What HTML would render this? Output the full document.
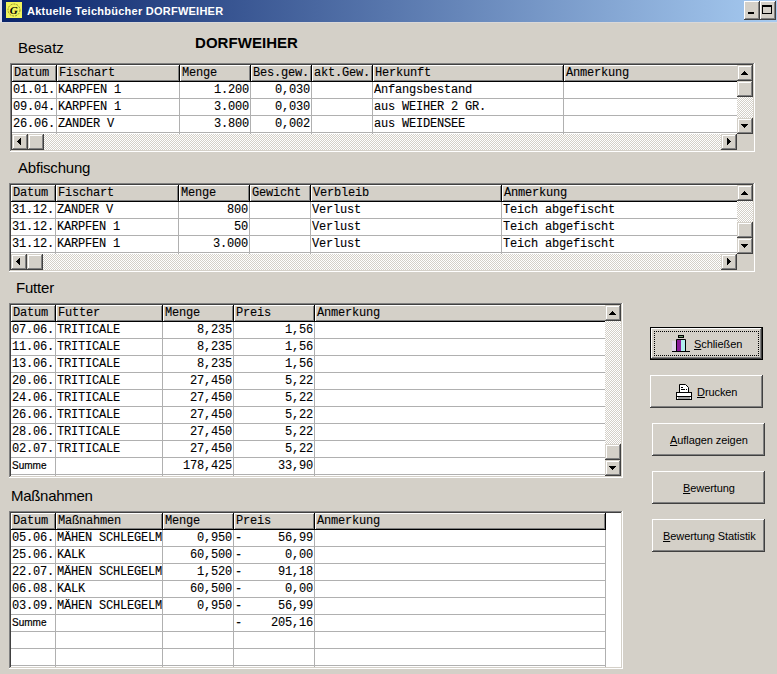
<!DOCTYPE html>
<html><head><meta charset="utf-8"><style>
html,body{margin:0;padding:0}
body{width:777px;height:674px;position:relative;overflow:hidden;background:#D4D0C8;font-family:"Liberation Sans",sans-serif}
div,svg{position:absolute}
.t{font:12px "Liberation Mono",monospace;line-height:16px;white-space:pre;color:#000;letter-spacing:-0.2px;-webkit-text-stroke:0.1px #000}
.s{font:10px "Liberation Sans",sans-serif;line-height:16px;white-space:pre;color:#000;-webkit-text-stroke:0.2px #000}
.ttl{font:bold 11px "Liberation Sans",sans-serif;line-height:14px;white-space:pre;color:#fff;letter-spacing:0.25px}
.btn{font:11px "Liberation Sans",sans-serif;line-height:14px;white-space:pre;color:#000;letter-spacing:-0.08px}
.lbl{font:15px "Liberation Sans",sans-serif;line-height:20px;white-space:pre;color:#000}
</style></head><body>
<div style="left:0;top:0;width:2px;height:22px;background:#E4E2EA"></div>
<div style="left:2px;top:0;width:775px;height:22px;background:linear-gradient(to right,#0A246A 0%,#A6CAF0 100%)"></div>
<div style="left:0;top:22px;width:777px;height:1px;background:#DAD8D8"></div>
<svg style="left:6px;top:2px" width="16" height="16" viewBox="0 0 16 16"><rect width="16" height="16" fill="#F2F45C"/><circle cx="8" cy="8" r="6" fill="none" stroke="#7A7A18" stroke-width="0.8" stroke-dasharray="2 1"/><text x="7.8" y="12" text-anchor="middle" font-family="Liberation Serif" font-style="italic" font-weight="bold" font-size="11" fill="#000">G</text></svg>
<div class="ttl" style="left:27px;top:4px">Aktuelle Teichbücher DORFWEIHER</div>
<div style="left:744px;top:1px;width:16px;height:19px;background:#404040"></div>
<div style="left:744px;top:1px;width:15px;height:18px;background:#fff"></div>
<div style="left:745px;top:2px;width:14px;height:17px;background:#808080"></div>
<div style="left:745px;top:2px;width:13px;height:16px;background:#D4D0C8"></div>
<div style="left:748px;top:12px;width:6px;height:2px;background:#000"></div>
<div style="left:760px;top:1px;width:16px;height:19px;background:#404040"></div>
<div style="left:760px;top:1px;width:15px;height:18px;background:#fff"></div>
<div style="left:761px;top:2px;width:14px;height:17px;background:#808080"></div>
<div style="left:761px;top:2px;width:13px;height:16px;background:#D4D0C8"></div>
<div style="left:762px;top:5px;width:10px;height:9px;background:#000"></div>
<div style="left:763px;top:7px;width:8px;height:6px;background:#D4D0C8"></div>
<div style="left:650px;top:327px;width:113px;height:33px;background:#000"></div>
<div style="left:651px;top:328px;width:111px;height:31px;background:#404040"></div>
<div style="left:651px;top:328px;width:110px;height:30px;background:#fff"></div>
<div style="left:652px;top:329px;width:109px;height:29px;background:#808080"></div>
<div style="left:652px;top:329px;width:108px;height:28px;background:#D4D0C8"></div>
<div style="left:654px;top:331px;width:105px;height:25px;border:1px dotted #000;box-sizing:border-box"></div>
<div style="left:650px;top:375px;width:113px;height:33px;background:#404040"></div>
<div style="left:650px;top:375px;width:112px;height:32px;background:#fff"></div>
<div style="left:651px;top:376px;width:111px;height:31px;background:#808080"></div>
<div style="left:651px;top:376px;width:110px;height:30px;background:#D4D0C8"></div>
<div style="left:652px;top:423px;width:113px;height:33px;background:#404040"></div>
<div style="left:652px;top:423px;width:112px;height:32px;background:#fff"></div>
<div style="left:653px;top:424px;width:111px;height:31px;background:#808080"></div>
<div style="left:653px;top:424px;width:110px;height:30px;background:#D4D0C8"></div>
<div style="left:652px;top:471px;width:113px;height:33px;background:#404040"></div>
<div style="left:652px;top:471px;width:112px;height:32px;background:#fff"></div>
<div style="left:653px;top:472px;width:111px;height:31px;background:#808080"></div>
<div style="left:653px;top:472px;width:110px;height:30px;background:#D4D0C8"></div>
<div style="left:652px;top:519px;width:113px;height:33px;background:#404040"></div>
<div style="left:652px;top:519px;width:112px;height:32px;background:#fff"></div>
<div style="left:653px;top:520px;width:111px;height:31px;background:#808080"></div>
<div style="left:653px;top:520px;width:110px;height:30px;background:#D4D0C8"></div>
<div class="btn" style="left:694px;top:337px;"><u>S</u>chließen</div>
<div class="btn" style="left:697px;top:385px;"><u>D</u>rucken</div>
<div class="btn" style="left:670px;top:433px;"><u>A</u>uflagen zeigen</div>
<div class="btn" style="left:683px;top:481px;"><u>B</u>ewertung</div>
<div class="btn" style="left:663px;top:529px;"><u>B</u>ewertung Statistik</div>
<svg style="left:670px;top:333px" width="22" height="20" viewBox="0 0 22 20"><rect x="2" y="8" width="4" height="10" fill="#E2D6EA"/><rect x="7" y="7" width="4" height="11" fill="#8A1A9A"/><rect x="11" y="7" width="4" height="11" fill="#B0F0F0"/><path d="M6.5 18 V6.5 H15.5 V18" fill="none" stroke="#000" stroke-width="1"/><rect x="8.5" y="2.5" width="5" height="2" fill="#70A070" stroke="#000" stroke-width="1"/><path d="M2 18.5 H20" stroke="#000" stroke-width="1"/></svg>
<svg style="left:676px;top:384px" width="17" height="17" viewBox="0 0 17 17"><path d="M3.5 8.5 V0.5 H9.5 L12.5 3.5 V8.5" fill="#fff" stroke="#000" stroke-width="1"/><rect x="5" y="3" width="2" height="1" fill="#000"/><rect x="5" y="5" width="4" height="1" fill="#000"/><rect x="10" y="5" width="1" height="1" fill="#000"/><rect x="0.5" y="8.5" width="15" height="7" fill="#fff" stroke="#000" stroke-width="1"/><rect x="1" y="12" width="14" height="1" fill="#000"/><rect x="2" y="13" width="12" height="2" fill="#A0A0A0"/></svg>
<div class="lbl" style="left:18px;top:38px;">Besatz</div>
<div class="lbl" style="left:195px;top:33px;font-weight:bold;letter-spacing:0.05px">DORFWEIHER</div>
<div class="lbl" style="left:18px;top:158px;letter-spacing:-0.2px">Abfischung</div>
<div class="lbl" style="left:16px;top:278px;letter-spacing:-0.2px">Futter</div>
<div class="lbl" style="left:11px;top:486px;letter-spacing:-0.3px">Maßnahmen</div>
<div style="left:10px;top:63px;width:745px;height:89px;background:#fff"></div>
<div style="left:10px;top:63px;width:744px;height:88px;background:#808080"></div>
<div style="left:11px;top:64px;width:743px;height:87px;background:#D4D0C8"></div>
<div style="left:11px;top:64px;width:742px;height:86px;background:#404040"></div>
<div style="left:12px;top:65px;width:741px;height:85px;background:#fff"></div>
<div style="left:12px;top:65px;width:725px;height:69px;overflow:hidden">
<div style="left:0;top:16px;width:953px;height:1px;background:#000"></div>
<div style="left:0;top:33px;width:953px;height:1px;background:#B0B0B0"></div>
<div style="left:0;top:50px;width:953px;height:1px;background:#B0B0B0"></div>
<div style="left:0;top:67px;width:953px;height:1px;background:#B0B0B0"></div>
<div style="left:0;top:84px;width:953px;height:1px;background:#B0B0B0"></div>
<div style="left:0px;top:0;width:44px;height:16px;background:#D4D0C8"></div>
<div style="left:0px;top:0;width:44px;height:1px;background:#fff"></div>
<div style="left:0px;top:0;width:1px;height:16px;background:#fff"></div>
<div style="left:43px;top:1px;width:1px;height:15px;background:#808080"></div>
<div style="left:1px;top:15px;width:43px;height:1px;background:#808080"></div>
<div style="left:44px;top:0;width:1px;height:17px;background:#000"></div>
<div style="left:44px;top:17px;width:1px;height:52px;background:#B0B0B0"></div>
<div class="t" style="left:2px;top:0">Datum</div>
<div style="left:45px;top:0;width:122px;height:16px;background:#D4D0C8"></div>
<div style="left:45px;top:0;width:122px;height:1px;background:#fff"></div>
<div style="left:45px;top:0;width:1px;height:16px;background:#fff"></div>
<div style="left:166px;top:1px;width:1px;height:15px;background:#808080"></div>
<div style="left:46px;top:15px;width:121px;height:1px;background:#808080"></div>
<div style="left:167px;top:0;width:1px;height:17px;background:#000"></div>
<div style="left:167px;top:17px;width:1px;height:52px;background:#B0B0B0"></div>
<div class="t" style="left:47px;top:0">Fischart</div>
<div style="left:168px;top:0;width:70px;height:16px;background:#D4D0C8"></div>
<div style="left:168px;top:0;width:70px;height:1px;background:#fff"></div>
<div style="left:168px;top:0;width:1px;height:16px;background:#fff"></div>
<div style="left:237px;top:1px;width:1px;height:15px;background:#808080"></div>
<div style="left:169px;top:15px;width:69px;height:1px;background:#808080"></div>
<div style="left:238px;top:0;width:1px;height:17px;background:#000"></div>
<div style="left:238px;top:17px;width:1px;height:52px;background:#B0B0B0"></div>
<div class="t" style="left:170px;top:0">Menge</div>
<div style="left:239px;top:0;width:60px;height:16px;background:#D4D0C8"></div>
<div style="left:239px;top:0;width:60px;height:1px;background:#fff"></div>
<div style="left:239px;top:0;width:1px;height:16px;background:#fff"></div>
<div style="left:298px;top:1px;width:1px;height:15px;background:#808080"></div>
<div style="left:240px;top:15px;width:59px;height:1px;background:#808080"></div>
<div style="left:299px;top:0;width:1px;height:17px;background:#000"></div>
<div style="left:299px;top:17px;width:1px;height:52px;background:#B0B0B0"></div>
<div class="t" style="left:241px;top:0">Bes.gew.</div>
<div style="left:300px;top:0;width:60px;height:16px;background:#D4D0C8"></div>
<div style="left:300px;top:0;width:60px;height:1px;background:#fff"></div>
<div style="left:300px;top:0;width:1px;height:16px;background:#fff"></div>
<div style="left:359px;top:1px;width:1px;height:15px;background:#808080"></div>
<div style="left:301px;top:15px;width:59px;height:1px;background:#808080"></div>
<div style="left:360px;top:0;width:1px;height:17px;background:#000"></div>
<div style="left:360px;top:17px;width:1px;height:52px;background:#B0B0B0"></div>
<div class="t" style="left:302px;top:0">akt.Gew.</div>
<div style="left:361px;top:0;width:190px;height:16px;background:#D4D0C8"></div>
<div style="left:361px;top:0;width:190px;height:1px;background:#fff"></div>
<div style="left:361px;top:0;width:1px;height:16px;background:#fff"></div>
<div style="left:550px;top:1px;width:1px;height:15px;background:#808080"></div>
<div style="left:362px;top:15px;width:189px;height:1px;background:#808080"></div>
<div style="left:551px;top:0;width:1px;height:17px;background:#000"></div>
<div style="left:551px;top:17px;width:1px;height:52px;background:#B0B0B0"></div>
<div class="t" style="left:363px;top:0">Herkunft</div>
<div style="left:552px;top:0;width:400px;height:16px;background:#D4D0C8"></div>
<div style="left:552px;top:0;width:400px;height:1px;background:#fff"></div>
<div style="left:552px;top:0;width:1px;height:16px;background:#fff"></div>
<div style="left:951px;top:1px;width:1px;height:15px;background:#808080"></div>
<div style="left:553px;top:15px;width:399px;height:1px;background:#808080"></div>
<div style="left:952px;top:0;width:1px;height:17px;background:#000"></div>
<div style="left:952px;top:17px;width:1px;height:52px;background:#B0B0B0"></div>
<div class="t" style="left:554px;top:0">Anmerkung</div>
<div class="t" style="left:1px;top:17px;width:43px;overflow:hidden">01.01.</div>
<div class="t" style="left:46px;top:17px;width:121px;overflow:hidden">KARPFEN 1</div>
<div class="t" style="left:168px;top:17px;width:69px;text-align:right">1.200</div>
<div class="t" style="left:239px;top:17px;width:59px;text-align:right">0,030</div>
<div class="t" style="left:362px;top:17px;width:189px;overflow:hidden">Anfangsbestand</div>
<div class="t" style="left:1px;top:34px;width:43px;overflow:hidden">09.04.</div>
<div class="t" style="left:46px;top:34px;width:121px;overflow:hidden">KARPFEN 1</div>
<div class="t" style="left:168px;top:34px;width:69px;text-align:right">3.000</div>
<div class="t" style="left:239px;top:34px;width:59px;text-align:right">0,030</div>
<div class="t" style="left:362px;top:34px;width:189px;overflow:hidden">aus WEIHER 2 GR.</div>
<div class="t" style="left:1px;top:51px;width:43px;overflow:hidden">26.06.</div>
<div class="t" style="left:46px;top:51px;width:121px;overflow:hidden">ZANDER V</div>
<div class="t" style="left:168px;top:51px;width:69px;text-align:right">3.800</div>
<div class="t" style="left:239px;top:51px;width:59px;text-align:right">0,002</div>
<div class="t" style="left:362px;top:51px;width:189px;overflow:hidden">aus WEIDENSEE</div>
</div>
<div style="left:737px;top:65px;width:16px;height:69px;background-color:#fff;background-image:linear-gradient(45deg,#D4D0C8 25%,transparent 25%,transparent 75%,#D4D0C8 75%),linear-gradient(45deg,#D4D0C8 25%,transparent 25%,transparent 75%,#D4D0C8 75%);background-size:2px 2px;background-position:0 0,1px 1px;"></div>
<div style="left:737px;top:65px;width:16px;height:16px;background:#404040"></div>
<div style="left:737px;top:65px;width:15px;height:15px;background:#D4D0C8"></div>
<div style="left:738px;top:66px;width:14px;height:14px;background:#808080"></div>
<div style="left:738px;top:66px;width:13px;height:13px;background:#fff"></div>
<div style="left:739px;top:67px;width:12px;height:12px;background:#D4D0C8"></div>
<div style="left:744px;top:71px;width:1px;height:1px;background:#000"></div>
<div style="left:743px;top:72px;width:3px;height:1px;background:#000"></div>
<div style="left:742px;top:73px;width:5px;height:1px;background:#000"></div>
<div style="left:741px;top:74px;width:7px;height:1px;background:#000"></div>
<div style="left:737px;top:118px;width:16px;height:16px;background:#404040"></div>
<div style="left:737px;top:118px;width:15px;height:15px;background:#D4D0C8"></div>
<div style="left:738px;top:119px;width:14px;height:14px;background:#808080"></div>
<div style="left:738px;top:119px;width:13px;height:13px;background:#fff"></div>
<div style="left:739px;top:120px;width:12px;height:12px;background:#D4D0C8"></div>
<div style="left:741px;top:124px;width:7px;height:1px;background:#000"></div>
<div style="left:742px;top:125px;width:5px;height:1px;background:#000"></div>
<div style="left:743px;top:126px;width:3px;height:1px;background:#000"></div>
<div style="left:744px;top:127px;width:1px;height:1px;background:#000"></div>
<div style="left:737px;top:81px;width:16px;height:16px;background:#404040"></div>
<div style="left:737px;top:81px;width:15px;height:15px;background:#D4D0C8"></div>
<div style="left:738px;top:82px;width:14px;height:14px;background:#808080"></div>
<div style="left:738px;top:82px;width:13px;height:13px;background:#fff"></div>
<div style="left:739px;top:83px;width:12px;height:12px;background:#D4D0C8"></div>
<div style="left:12px;top:134px;width:725px;height:16px;background-color:#fff;background-image:linear-gradient(45deg,#D4D0C8 25%,transparent 25%,transparent 75%,#D4D0C8 75%),linear-gradient(45deg,#D4D0C8 25%,transparent 25%,transparent 75%,#D4D0C8 75%);background-size:2px 2px;background-position:0 0,1px 1px;"></div>
<div style="left:12px;top:134px;width:16px;height:16px;background:#404040"></div>
<div style="left:12px;top:134px;width:15px;height:15px;background:#D4D0C8"></div>
<div style="left:13px;top:135px;width:14px;height:14px;background:#808080"></div>
<div style="left:13px;top:135px;width:13px;height:13px;background:#fff"></div>
<div style="left:14px;top:136px;width:12px;height:12px;background:#D4D0C8"></div>
<div style="left:17px;top:141px;width:1px;height:1px;background:#000"></div>
<div style="left:18px;top:140px;width:1px;height:3px;background:#000"></div>
<div style="left:19px;top:139px;width:1px;height:5px;background:#000"></div>
<div style="left:20px;top:138px;width:1px;height:7px;background:#000"></div>
<div style="left:721px;top:134px;width:16px;height:16px;background:#404040"></div>
<div style="left:721px;top:134px;width:15px;height:15px;background:#D4D0C8"></div>
<div style="left:722px;top:135px;width:14px;height:14px;background:#808080"></div>
<div style="left:722px;top:135px;width:13px;height:13px;background:#fff"></div>
<div style="left:723px;top:136px;width:12px;height:12px;background:#D4D0C8"></div>
<div style="left:727px;top:138px;width:1px;height:7px;background:#000"></div>
<div style="left:728px;top:139px;width:1px;height:5px;background:#000"></div>
<div style="left:729px;top:140px;width:1px;height:3px;background:#000"></div>
<div style="left:730px;top:141px;width:1px;height:1px;background:#000"></div>
<div style="left:28px;top:134px;width:16px;height:16px;background:#404040"></div>
<div style="left:28px;top:134px;width:15px;height:15px;background:#D4D0C8"></div>
<div style="left:29px;top:135px;width:14px;height:14px;background:#808080"></div>
<div style="left:29px;top:135px;width:13px;height:13px;background:#fff"></div>
<div style="left:30px;top:136px;width:12px;height:12px;background:#D4D0C8"></div>
<div style="left:737px;top:134px;width:16px;height:16px;background:#D4D0C8"></div>
<div style="left:9px;top:183px;width:746px;height:89px;background:#fff"></div>
<div style="left:9px;top:183px;width:745px;height:88px;background:#808080"></div>
<div style="left:10px;top:184px;width:744px;height:87px;background:#D4D0C8"></div>
<div style="left:10px;top:184px;width:743px;height:86px;background:#404040"></div>
<div style="left:11px;top:185px;width:742px;height:85px;background:#fff"></div>
<div style="left:11px;top:185px;width:726px;height:69px;overflow:hidden">
<div style="left:0;top:16px;width:892px;height:1px;background:#000"></div>
<div style="left:0;top:33px;width:892px;height:1px;background:#B0B0B0"></div>
<div style="left:0;top:50px;width:892px;height:1px;background:#B0B0B0"></div>
<div style="left:0;top:67px;width:892px;height:1px;background:#B0B0B0"></div>
<div style="left:0;top:84px;width:892px;height:1px;background:#B0B0B0"></div>
<div style="left:0px;top:0;width:44px;height:16px;background:#D4D0C8"></div>
<div style="left:0px;top:0;width:44px;height:1px;background:#fff"></div>
<div style="left:0px;top:0;width:1px;height:16px;background:#fff"></div>
<div style="left:43px;top:1px;width:1px;height:15px;background:#808080"></div>
<div style="left:1px;top:15px;width:43px;height:1px;background:#808080"></div>
<div style="left:44px;top:0;width:1px;height:17px;background:#000"></div>
<div style="left:44px;top:17px;width:1px;height:52px;background:#B0B0B0"></div>
<div class="t" style="left:2px;top:0">Datum</div>
<div style="left:45px;top:0;width:122px;height:16px;background:#D4D0C8"></div>
<div style="left:45px;top:0;width:122px;height:1px;background:#fff"></div>
<div style="left:45px;top:0;width:1px;height:16px;background:#fff"></div>
<div style="left:166px;top:1px;width:1px;height:15px;background:#808080"></div>
<div style="left:46px;top:15px;width:121px;height:1px;background:#808080"></div>
<div style="left:167px;top:0;width:1px;height:17px;background:#000"></div>
<div style="left:167px;top:17px;width:1px;height:52px;background:#B0B0B0"></div>
<div class="t" style="left:47px;top:0">Fischart</div>
<div style="left:168px;top:0;width:70px;height:16px;background:#D4D0C8"></div>
<div style="left:168px;top:0;width:70px;height:1px;background:#fff"></div>
<div style="left:168px;top:0;width:1px;height:16px;background:#fff"></div>
<div style="left:237px;top:1px;width:1px;height:15px;background:#808080"></div>
<div style="left:169px;top:15px;width:69px;height:1px;background:#808080"></div>
<div style="left:238px;top:0;width:1px;height:17px;background:#000"></div>
<div style="left:238px;top:17px;width:1px;height:52px;background:#B0B0B0"></div>
<div class="t" style="left:170px;top:0">Menge</div>
<div style="left:239px;top:0;width:60px;height:16px;background:#D4D0C8"></div>
<div style="left:239px;top:0;width:60px;height:1px;background:#fff"></div>
<div style="left:239px;top:0;width:1px;height:16px;background:#fff"></div>
<div style="left:298px;top:1px;width:1px;height:15px;background:#808080"></div>
<div style="left:240px;top:15px;width:59px;height:1px;background:#808080"></div>
<div style="left:299px;top:0;width:1px;height:17px;background:#000"></div>
<div style="left:299px;top:17px;width:1px;height:52px;background:#B0B0B0"></div>
<div class="t" style="left:241px;top:0">Gewicht</div>
<div style="left:300px;top:0;width:190px;height:16px;background:#D4D0C8"></div>
<div style="left:300px;top:0;width:190px;height:1px;background:#fff"></div>
<div style="left:300px;top:0;width:1px;height:16px;background:#fff"></div>
<div style="left:489px;top:1px;width:1px;height:15px;background:#808080"></div>
<div style="left:301px;top:15px;width:189px;height:1px;background:#808080"></div>
<div style="left:490px;top:0;width:1px;height:17px;background:#000"></div>
<div style="left:490px;top:17px;width:1px;height:52px;background:#B0B0B0"></div>
<div class="t" style="left:302px;top:0">Verbleib</div>
<div style="left:491px;top:0;width:400px;height:16px;background:#D4D0C8"></div>
<div style="left:491px;top:0;width:400px;height:1px;background:#fff"></div>
<div style="left:491px;top:0;width:1px;height:16px;background:#fff"></div>
<div style="left:890px;top:1px;width:1px;height:15px;background:#808080"></div>
<div style="left:492px;top:15px;width:399px;height:1px;background:#808080"></div>
<div style="left:891px;top:0;width:1px;height:17px;background:#000"></div>
<div style="left:891px;top:17px;width:1px;height:52px;background:#B0B0B0"></div>
<div class="t" style="left:493px;top:0">Anmerkung</div>
<div class="t" style="left:1px;top:17px;width:43px;overflow:hidden">31.12.</div>
<div class="t" style="left:46px;top:17px;width:121px;overflow:hidden">ZANDER V</div>
<div class="t" style="left:168px;top:17px;width:69px;text-align:right">800</div>
<div class="t" style="left:301px;top:17px;width:189px;overflow:hidden">Verlust</div>
<div class="t" style="left:492px;top:17px;width:399px;overflow:hidden">Teich abgefischt</div>
<div class="t" style="left:1px;top:34px;width:43px;overflow:hidden">31.12.</div>
<div class="t" style="left:46px;top:34px;width:121px;overflow:hidden">KARPFEN 1</div>
<div class="t" style="left:168px;top:34px;width:69px;text-align:right">50</div>
<div class="t" style="left:301px;top:34px;width:189px;overflow:hidden">Verlust</div>
<div class="t" style="left:492px;top:34px;width:399px;overflow:hidden">Teich abgefischt</div>
<div class="t" style="left:1px;top:51px;width:43px;overflow:hidden">31.12.</div>
<div class="t" style="left:46px;top:51px;width:121px;overflow:hidden">KARPFEN 1</div>
<div class="t" style="left:168px;top:51px;width:69px;text-align:right">3.000</div>
<div class="t" style="left:301px;top:51px;width:189px;overflow:hidden">Verlust</div>
<div class="t" style="left:492px;top:51px;width:399px;overflow:hidden">Teich abgefischt</div>
</div>
<div style="left:737px;top:185px;width:16px;height:69px;background-color:#fff;background-image:linear-gradient(45deg,#D4D0C8 25%,transparent 25%,transparent 75%,#D4D0C8 75%),linear-gradient(45deg,#D4D0C8 25%,transparent 25%,transparent 75%,#D4D0C8 75%);background-size:2px 2px;background-position:0 0,1px 1px;"></div>
<div style="left:737px;top:185px;width:16px;height:16px;background:#404040"></div>
<div style="left:737px;top:185px;width:15px;height:15px;background:#D4D0C8"></div>
<div style="left:738px;top:186px;width:14px;height:14px;background:#808080"></div>
<div style="left:738px;top:186px;width:13px;height:13px;background:#fff"></div>
<div style="left:739px;top:187px;width:12px;height:12px;background:#D4D0C8"></div>
<div style="left:744px;top:191px;width:1px;height:1px;background:#000"></div>
<div style="left:743px;top:192px;width:3px;height:1px;background:#000"></div>
<div style="left:742px;top:193px;width:5px;height:1px;background:#000"></div>
<div style="left:741px;top:194px;width:7px;height:1px;background:#000"></div>
<div style="left:737px;top:238px;width:16px;height:16px;background:#404040"></div>
<div style="left:737px;top:238px;width:15px;height:15px;background:#D4D0C8"></div>
<div style="left:738px;top:239px;width:14px;height:14px;background:#808080"></div>
<div style="left:738px;top:239px;width:13px;height:13px;background:#fff"></div>
<div style="left:739px;top:240px;width:12px;height:12px;background:#D4D0C8"></div>
<div style="left:741px;top:244px;width:7px;height:1px;background:#000"></div>
<div style="left:742px;top:245px;width:5px;height:1px;background:#000"></div>
<div style="left:743px;top:246px;width:3px;height:1px;background:#000"></div>
<div style="left:744px;top:247px;width:1px;height:1px;background:#000"></div>
<div style="left:737px;top:222px;width:16px;height:16px;background:#404040"></div>
<div style="left:737px;top:222px;width:15px;height:15px;background:#D4D0C8"></div>
<div style="left:738px;top:223px;width:14px;height:14px;background:#808080"></div>
<div style="left:738px;top:223px;width:13px;height:13px;background:#fff"></div>
<div style="left:739px;top:224px;width:12px;height:12px;background:#D4D0C8"></div>
<div style="left:11px;top:254px;width:726px;height:16px;background-color:#fff;background-image:linear-gradient(45deg,#D4D0C8 25%,transparent 25%,transparent 75%,#D4D0C8 75%),linear-gradient(45deg,#D4D0C8 25%,transparent 25%,transparent 75%,#D4D0C8 75%);background-size:2px 2px;background-position:0 0,1px 1px;"></div>
<div style="left:11px;top:254px;width:16px;height:16px;background:#404040"></div>
<div style="left:11px;top:254px;width:15px;height:15px;background:#D4D0C8"></div>
<div style="left:12px;top:255px;width:14px;height:14px;background:#808080"></div>
<div style="left:12px;top:255px;width:13px;height:13px;background:#fff"></div>
<div style="left:13px;top:256px;width:12px;height:12px;background:#D4D0C8"></div>
<div style="left:16px;top:261px;width:1px;height:1px;background:#000"></div>
<div style="left:17px;top:260px;width:1px;height:3px;background:#000"></div>
<div style="left:18px;top:259px;width:1px;height:5px;background:#000"></div>
<div style="left:19px;top:258px;width:1px;height:7px;background:#000"></div>
<div style="left:721px;top:254px;width:16px;height:16px;background:#404040"></div>
<div style="left:721px;top:254px;width:15px;height:15px;background:#D4D0C8"></div>
<div style="left:722px;top:255px;width:14px;height:14px;background:#808080"></div>
<div style="left:722px;top:255px;width:13px;height:13px;background:#fff"></div>
<div style="left:723px;top:256px;width:12px;height:12px;background:#D4D0C8"></div>
<div style="left:727px;top:258px;width:1px;height:7px;background:#000"></div>
<div style="left:728px;top:259px;width:1px;height:5px;background:#000"></div>
<div style="left:729px;top:260px;width:1px;height:3px;background:#000"></div>
<div style="left:730px;top:261px;width:1px;height:1px;background:#000"></div>
<div style="left:27px;top:254px;width:16px;height:16px;background:#404040"></div>
<div style="left:27px;top:254px;width:15px;height:15px;background:#D4D0C8"></div>
<div style="left:28px;top:255px;width:14px;height:14px;background:#808080"></div>
<div style="left:28px;top:255px;width:13px;height:13px;background:#fff"></div>
<div style="left:29px;top:256px;width:12px;height:12px;background:#D4D0C8"></div>
<div style="left:737px;top:254px;width:16px;height:16px;background:#D4D0C8"></div>
<div style="left:9px;top:303px;width:614px;height:175px;background:#fff"></div>
<div style="left:9px;top:303px;width:613px;height:174px;background:#808080"></div>
<div style="left:10px;top:304px;width:612px;height:173px;background:#D4D0C8"></div>
<div style="left:10px;top:304px;width:611px;height:172px;background:#404040"></div>
<div style="left:11px;top:305px;width:610px;height:171px;background:#fff"></div>
<div style="left:11px;top:305px;width:594px;height:171px;overflow:hidden">
<div style="left:0;top:16px;width:705px;height:1px;background:#000"></div>
<div style="left:0;top:33px;width:705px;height:1px;background:#B0B0B0"></div>
<div style="left:0;top:50px;width:705px;height:1px;background:#B0B0B0"></div>
<div style="left:0;top:67px;width:705px;height:1px;background:#B0B0B0"></div>
<div style="left:0;top:84px;width:705px;height:1px;background:#B0B0B0"></div>
<div style="left:0;top:101px;width:705px;height:1px;background:#B0B0B0"></div>
<div style="left:0;top:118px;width:705px;height:1px;background:#B0B0B0"></div>
<div style="left:0;top:135px;width:705px;height:1px;background:#B0B0B0"></div>
<div style="left:0;top:152px;width:705px;height:1px;background:#B0B0B0"></div>
<div style="left:0;top:169px;width:705px;height:1px;background:#B0B0B0"></div>
<div style="left:0;top:186px;width:705px;height:1px;background:#B0B0B0"></div>
<div style="left:0px;top:0;width:44px;height:16px;background:#D4D0C8"></div>
<div style="left:0px;top:0;width:44px;height:1px;background:#fff"></div>
<div style="left:0px;top:0;width:1px;height:16px;background:#fff"></div>
<div style="left:43px;top:1px;width:1px;height:15px;background:#808080"></div>
<div style="left:1px;top:15px;width:43px;height:1px;background:#808080"></div>
<div style="left:44px;top:0;width:1px;height:17px;background:#000"></div>
<div style="left:44px;top:17px;width:1px;height:154px;background:#B0B0B0"></div>
<div class="t" style="left:2px;top:0">Datum</div>
<div style="left:45px;top:0;width:106px;height:16px;background:#D4D0C8"></div>
<div style="left:45px;top:0;width:106px;height:1px;background:#fff"></div>
<div style="left:45px;top:0;width:1px;height:16px;background:#fff"></div>
<div style="left:150px;top:1px;width:1px;height:15px;background:#808080"></div>
<div style="left:46px;top:15px;width:105px;height:1px;background:#808080"></div>
<div style="left:151px;top:0;width:1px;height:17px;background:#000"></div>
<div style="left:151px;top:17px;width:1px;height:154px;background:#B0B0B0"></div>
<div class="t" style="left:47px;top:0">Futter</div>
<div style="left:152px;top:0;width:70px;height:16px;background:#D4D0C8"></div>
<div style="left:152px;top:0;width:70px;height:1px;background:#fff"></div>
<div style="left:152px;top:0;width:1px;height:16px;background:#fff"></div>
<div style="left:221px;top:1px;width:1px;height:15px;background:#808080"></div>
<div style="left:153px;top:15px;width:69px;height:1px;background:#808080"></div>
<div style="left:222px;top:0;width:1px;height:17px;background:#000"></div>
<div style="left:222px;top:17px;width:1px;height:154px;background:#B0B0B0"></div>
<div class="t" style="left:154px;top:0">Menge</div>
<div style="left:223px;top:0;width:80px;height:16px;background:#D4D0C8"></div>
<div style="left:223px;top:0;width:80px;height:1px;background:#fff"></div>
<div style="left:223px;top:0;width:1px;height:16px;background:#fff"></div>
<div style="left:302px;top:1px;width:1px;height:15px;background:#808080"></div>
<div style="left:224px;top:15px;width:79px;height:1px;background:#808080"></div>
<div style="left:303px;top:0;width:1px;height:17px;background:#000"></div>
<div style="left:303px;top:17px;width:1px;height:154px;background:#B0B0B0"></div>
<div class="t" style="left:225px;top:0">Preis</div>
<div style="left:304px;top:0;width:400px;height:16px;background:#D4D0C8"></div>
<div style="left:304px;top:0;width:400px;height:1px;background:#fff"></div>
<div style="left:304px;top:0;width:1px;height:16px;background:#fff"></div>
<div style="left:703px;top:1px;width:1px;height:15px;background:#808080"></div>
<div style="left:305px;top:15px;width:399px;height:1px;background:#808080"></div>
<div style="left:704px;top:0;width:1px;height:17px;background:#000"></div>
<div style="left:704px;top:17px;width:1px;height:154px;background:#B0B0B0"></div>
<div class="t" style="left:306px;top:0">Anmerkung</div>
<div class="t" style="left:1px;top:17px;width:43px;overflow:hidden">07.06.</div>
<div class="t" style="left:46px;top:17px;width:105px;overflow:hidden">TRITICALE</div>
<div class="t" style="left:152px;top:17px;width:69px;text-align:right">8,235</div>
<div class="t" style="left:223px;top:17px;width:79px;text-align:right">1,56</div>
<div class="t" style="left:1px;top:34px;width:43px;overflow:hidden">11.06.</div>
<div class="t" style="left:46px;top:34px;width:105px;overflow:hidden">TRITICALE</div>
<div class="t" style="left:152px;top:34px;width:69px;text-align:right">8,235</div>
<div class="t" style="left:223px;top:34px;width:79px;text-align:right">1,56</div>
<div class="t" style="left:1px;top:51px;width:43px;overflow:hidden">13.06.</div>
<div class="t" style="left:46px;top:51px;width:105px;overflow:hidden">TRITICALE</div>
<div class="t" style="left:152px;top:51px;width:69px;text-align:right">8,235</div>
<div class="t" style="left:223px;top:51px;width:79px;text-align:right">1,56</div>
<div class="t" style="left:1px;top:68px;width:43px;overflow:hidden">20.06.</div>
<div class="t" style="left:46px;top:68px;width:105px;overflow:hidden">TRITICALE</div>
<div class="t" style="left:152px;top:68px;width:69px;text-align:right">27,450</div>
<div class="t" style="left:223px;top:68px;width:79px;text-align:right">5,22</div>
<div class="t" style="left:1px;top:85px;width:43px;overflow:hidden">24.06.</div>
<div class="t" style="left:46px;top:85px;width:105px;overflow:hidden">TRITICALE</div>
<div class="t" style="left:152px;top:85px;width:69px;text-align:right">27,450</div>
<div class="t" style="left:223px;top:85px;width:79px;text-align:right">5,22</div>
<div class="t" style="left:1px;top:102px;width:43px;overflow:hidden">26.06.</div>
<div class="t" style="left:46px;top:102px;width:105px;overflow:hidden">TRITICALE</div>
<div class="t" style="left:152px;top:102px;width:69px;text-align:right">27,450</div>
<div class="t" style="left:223px;top:102px;width:79px;text-align:right">5,22</div>
<div class="t" style="left:1px;top:119px;width:43px;overflow:hidden">28.06.</div>
<div class="t" style="left:46px;top:119px;width:105px;overflow:hidden">TRITICALE</div>
<div class="t" style="left:152px;top:119px;width:69px;text-align:right">27,450</div>
<div class="t" style="left:223px;top:119px;width:79px;text-align:right">5,22</div>
<div class="t" style="left:1px;top:136px;width:43px;overflow:hidden">02.07.</div>
<div class="t" style="left:46px;top:136px;width:105px;overflow:hidden">TRITICALE</div>
<div class="t" style="left:152px;top:136px;width:69px;text-align:right">27,450</div>
<div class="t" style="left:223px;top:136px;width:79px;text-align:right">5,22</div>
<div class="s" style="left:1px;top:153px">Summe</div>
<div class="t" style="left:152px;top:153px;width:69px;text-align:right">178,425</div>
<div class="t" style="left:223px;top:153px;width:79px;text-align:right">33,90</div>
</div>
<div style="left:605px;top:305px;width:16px;height:171px;background-color:#fff;background-image:linear-gradient(45deg,#D4D0C8 25%,transparent 25%,transparent 75%,#D4D0C8 75%),linear-gradient(45deg,#D4D0C8 25%,transparent 25%,transparent 75%,#D4D0C8 75%);background-size:2px 2px;background-position:0 0,1px 1px;"></div>
<div style="left:605px;top:305px;width:16px;height:16px;background:#404040"></div>
<div style="left:605px;top:305px;width:15px;height:15px;background:#D4D0C8"></div>
<div style="left:606px;top:306px;width:14px;height:14px;background:#808080"></div>
<div style="left:606px;top:306px;width:13px;height:13px;background:#fff"></div>
<div style="left:607px;top:307px;width:12px;height:12px;background:#D4D0C8"></div>
<div style="left:612px;top:311px;width:1px;height:1px;background:#000"></div>
<div style="left:611px;top:312px;width:3px;height:1px;background:#000"></div>
<div style="left:610px;top:313px;width:5px;height:1px;background:#000"></div>
<div style="left:609px;top:314px;width:7px;height:1px;background:#000"></div>
<div style="left:605px;top:460px;width:16px;height:16px;background:#404040"></div>
<div style="left:605px;top:460px;width:15px;height:15px;background:#D4D0C8"></div>
<div style="left:606px;top:461px;width:14px;height:14px;background:#808080"></div>
<div style="left:606px;top:461px;width:13px;height:13px;background:#fff"></div>
<div style="left:607px;top:462px;width:12px;height:12px;background:#D4D0C8"></div>
<div style="left:609px;top:466px;width:7px;height:1px;background:#000"></div>
<div style="left:610px;top:467px;width:5px;height:1px;background:#000"></div>
<div style="left:611px;top:468px;width:3px;height:1px;background:#000"></div>
<div style="left:612px;top:469px;width:1px;height:1px;background:#000"></div>
<div style="left:605px;top:444px;width:16px;height:16px;background:#404040"></div>
<div style="left:605px;top:444px;width:15px;height:15px;background:#D4D0C8"></div>
<div style="left:606px;top:445px;width:14px;height:14px;background:#808080"></div>
<div style="left:606px;top:445px;width:13px;height:13px;background:#fff"></div>
<div style="left:607px;top:446px;width:12px;height:12px;background:#D4D0C8"></div>
<div style="left:9px;top:511px;width:614px;height:158px;background:#fff"></div>
<div style="left:9px;top:511px;width:613px;height:157px;background:#808080"></div>
<div style="left:10px;top:512px;width:612px;height:156px;background:#D4D0C8"></div>
<div style="left:10px;top:512px;width:611px;height:155px;background:#404040"></div>
<div style="left:11px;top:513px;width:610px;height:154px;background:#fff"></div>
<div style="left:11px;top:513px;width:610px;height:154px;overflow:hidden">
<div style="left:0;top:16px;width:595px;height:1px;background:#000"></div>
<div style="left:0;top:33px;width:595px;height:1px;background:#B0B0B0"></div>
<div style="left:0;top:50px;width:595px;height:1px;background:#B0B0B0"></div>
<div style="left:0;top:67px;width:595px;height:1px;background:#B0B0B0"></div>
<div style="left:0;top:84px;width:595px;height:1px;background:#B0B0B0"></div>
<div style="left:0;top:101px;width:595px;height:1px;background:#B0B0B0"></div>
<div style="left:0;top:118px;width:595px;height:1px;background:#B0B0B0"></div>
<div style="left:0;top:135px;width:595px;height:1px;background:#B0B0B0"></div>
<div style="left:0;top:152px;width:595px;height:1px;background:#B0B0B0"></div>
<div style="left:0;top:169px;width:595px;height:1px;background:#B0B0B0"></div>
<div style="left:0px;top:0;width:44px;height:16px;background:#D4D0C8"></div>
<div style="left:0px;top:0;width:44px;height:1px;background:#fff"></div>
<div style="left:0px;top:0;width:1px;height:16px;background:#fff"></div>
<div style="left:43px;top:1px;width:1px;height:15px;background:#808080"></div>
<div style="left:1px;top:15px;width:43px;height:1px;background:#808080"></div>
<div style="left:44px;top:0;width:1px;height:17px;background:#000"></div>
<div style="left:44px;top:17px;width:1px;height:137px;background:#B0B0B0"></div>
<div class="t" style="left:2px;top:0">Datum</div>
<div style="left:45px;top:0;width:106px;height:16px;background:#D4D0C8"></div>
<div style="left:45px;top:0;width:106px;height:1px;background:#fff"></div>
<div style="left:45px;top:0;width:1px;height:16px;background:#fff"></div>
<div style="left:150px;top:1px;width:1px;height:15px;background:#808080"></div>
<div style="left:46px;top:15px;width:105px;height:1px;background:#808080"></div>
<div style="left:151px;top:0;width:1px;height:17px;background:#000"></div>
<div style="left:151px;top:17px;width:1px;height:137px;background:#B0B0B0"></div>
<div class="t" style="left:47px;top:0">Maßnahmen</div>
<div style="left:152px;top:0;width:70px;height:16px;background:#D4D0C8"></div>
<div style="left:152px;top:0;width:70px;height:1px;background:#fff"></div>
<div style="left:152px;top:0;width:1px;height:16px;background:#fff"></div>
<div style="left:221px;top:1px;width:1px;height:15px;background:#808080"></div>
<div style="left:153px;top:15px;width:69px;height:1px;background:#808080"></div>
<div style="left:222px;top:0;width:1px;height:17px;background:#000"></div>
<div style="left:222px;top:17px;width:1px;height:137px;background:#B0B0B0"></div>
<div class="t" style="left:154px;top:0">Menge</div>
<div style="left:223px;top:0;width:80px;height:16px;background:#D4D0C8"></div>
<div style="left:223px;top:0;width:80px;height:1px;background:#fff"></div>
<div style="left:223px;top:0;width:1px;height:16px;background:#fff"></div>
<div style="left:302px;top:1px;width:1px;height:15px;background:#808080"></div>
<div style="left:224px;top:15px;width:79px;height:1px;background:#808080"></div>
<div style="left:303px;top:0;width:1px;height:17px;background:#000"></div>
<div style="left:303px;top:17px;width:1px;height:137px;background:#B0B0B0"></div>
<div class="t" style="left:225px;top:0">Preis</div>
<div style="left:304px;top:0;width:290px;height:16px;background:#D4D0C8"></div>
<div style="left:304px;top:0;width:290px;height:1px;background:#fff"></div>
<div style="left:304px;top:0;width:1px;height:16px;background:#fff"></div>
<div style="left:593px;top:1px;width:1px;height:15px;background:#808080"></div>
<div style="left:305px;top:15px;width:289px;height:1px;background:#808080"></div>
<div style="left:594px;top:0;width:1px;height:17px;background:#000"></div>
<div style="left:594px;top:17px;width:1px;height:137px;background:#B0B0B0"></div>
<div class="t" style="left:306px;top:0">Anmerkung</div>
<div class="t" style="left:1px;top:17px;width:43px;overflow:hidden">05.06.</div>
<div class="t" style="left:46px;top:17px;width:105px;overflow:hidden">MÄHEN SCHLEGELM</div>
<div class="t" style="left:152px;top:17px;width:69px;text-align:right">0,950</div>
<div class="t" style="left:224px;top:17px">-</div>
<div class="t" style="left:223px;top:17px;width:79px;text-align:right">56,99</div>
<div class="t" style="left:1px;top:34px;width:43px;overflow:hidden">25.06.</div>
<div class="t" style="left:46px;top:34px;width:105px;overflow:hidden">KALK</div>
<div class="t" style="left:152px;top:34px;width:69px;text-align:right">60,500</div>
<div class="t" style="left:224px;top:34px">-</div>
<div class="t" style="left:223px;top:34px;width:79px;text-align:right">0,00</div>
<div class="t" style="left:1px;top:51px;width:43px;overflow:hidden">22.07.</div>
<div class="t" style="left:46px;top:51px;width:105px;overflow:hidden">MÄHEN SCHLEGELM</div>
<div class="t" style="left:152px;top:51px;width:69px;text-align:right">1,520</div>
<div class="t" style="left:224px;top:51px">-</div>
<div class="t" style="left:223px;top:51px;width:79px;text-align:right">91,18</div>
<div class="t" style="left:1px;top:68px;width:43px;overflow:hidden">06.08.</div>
<div class="t" style="left:46px;top:68px;width:105px;overflow:hidden">KALK</div>
<div class="t" style="left:152px;top:68px;width:69px;text-align:right">60,500</div>
<div class="t" style="left:224px;top:68px">-</div>
<div class="t" style="left:223px;top:68px;width:79px;text-align:right">0,00</div>
<div class="t" style="left:1px;top:85px;width:43px;overflow:hidden">03.09.</div>
<div class="t" style="left:46px;top:85px;width:105px;overflow:hidden">MÄHEN SCHLEGELM</div>
<div class="t" style="left:152px;top:85px;width:69px;text-align:right">0,950</div>
<div class="t" style="left:224px;top:85px">-</div>
<div class="t" style="left:223px;top:85px;width:79px;text-align:right">56,99</div>
<div class="s" style="left:1px;top:102px">Summe</div>
<div class="t" style="left:224px;top:102px">-</div>
<div class="t" style="left:223px;top:102px;width:79px;text-align:right">205,16</div>
</div>
</body></html>
